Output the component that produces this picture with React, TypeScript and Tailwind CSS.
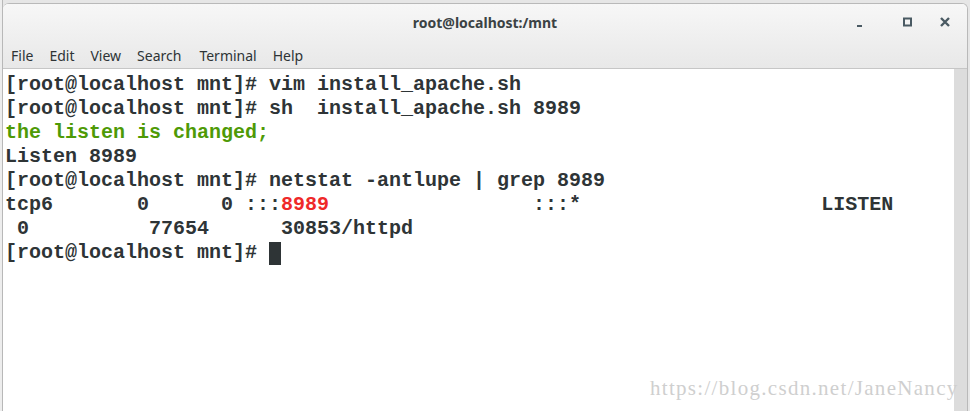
export default function App() {
  const prompt = "[root@localhost mnt]# ";
  return (
    <div className="w-[970px] h-[411px] overflow-hidden bg-[#e6e6e6] flex relative">
      <div className="w-[3px] shrink-0 bg-[#ededed] border-r border-[#b8b8b8]" />
      <div className="mt-[3px] w-[965px] flex flex-col rounded-t-[6px] border-t border-r border-[#b9b9b9] bg-white overflow-hidden">
        <div className="h-[65px] shrink-0 bg-gradient-to-b from-[#f7f7f7] to-[#e8e8e8] border-b border-[#c6c6c6] flex flex-col font-['Noto_Sans',sans-serif] text-[#2e3436]">
          <div className="h-[38px] flex items-center relative">
            <div className="absolute left-0 right-0 top-[9px] text-center text-[14px] leading-[20px] font-bold text-[#3b4244]">
              root@localhost:/mnt
            </div>
            <div className="ml-auto flex items-center pr-[16px] text-[#4a5a63]">
              <svg width="12" height="12" viewBox="0 0 12 12">
                <rect x="3" y="8" width="5" height="2" fill="currentColor" />
              </svg>
              <svg width="12" height="12" viewBox="0 0 12 12" className="ml-[36px]">
                <rect x="2" y="1.5" width="7" height="7" fill="none" stroke="currentColor" strokeWidth="2" />
              </svg>
              <svg width="12" height="12" viewBox="0 0 12 12" className="ml-[25px]">
                <path d="M2 1 L10 9 M10 1 L2 9" stroke="currentColor" strokeWidth="2.4" />
              </svg>
            </div>
          </div>
          <div className="flex items-center gap-[16px] pl-[8px] pt-[3px] text-[14px] text-[#2e3436]">
            <span>File</span>
            <span>Edit</span>
            <span>View</span>
            <span>Search</span>
            <span className="ml-[2px]">Terminal</span>
            <span>Help</span>
          </div>
        </div>
        <div className="flex-1 flex min-h-0">
          <div className="flex-1 pl-[2px] pt-[4px] font-['Liberation_Mono',monospace] font-bold text-[20px] leading-[24px] text-[#2e3436] whitespace-pre">
            <div>{prompt}vim install_apache.sh</div>
            <div>{prompt}sh  install_apache.sh 8989</div>
            <div className="text-[#4e9a06]">the listen is changed;</div>
            <div>Listen 8989</div>
            <div>{prompt}netstat -antlupe | grep 8989</div>
            <div>
              {"tcp6       0      0 :::"}
              <span className="text-[#ef2929]">8989</span>
              {"                 :::*                    LISTEN"}
            </div>
            <div>{" 0          77654      30853/httpd"}</div>
            <div className="flex">
              <span>{prompt}</span>
              <span className="inline-block w-[12px] h-[23px] mt-[1px] bg-[#2e3436]" />
            </div>
          </div>
          <div className="w-[13px] shrink-0 bg-[#dcdcdc]" />
        </div>
      </div>
      <div className="absolute left-[650px] top-[376px] font-['Liberation_Serif',serif] text-[21px] leading-[24px] tracking-[1.3px] text-[#cfcfcf] whitespace-nowrap">
        https://blog.csdn.net/JaneNancy
      </div>
    </div>
  );
}
